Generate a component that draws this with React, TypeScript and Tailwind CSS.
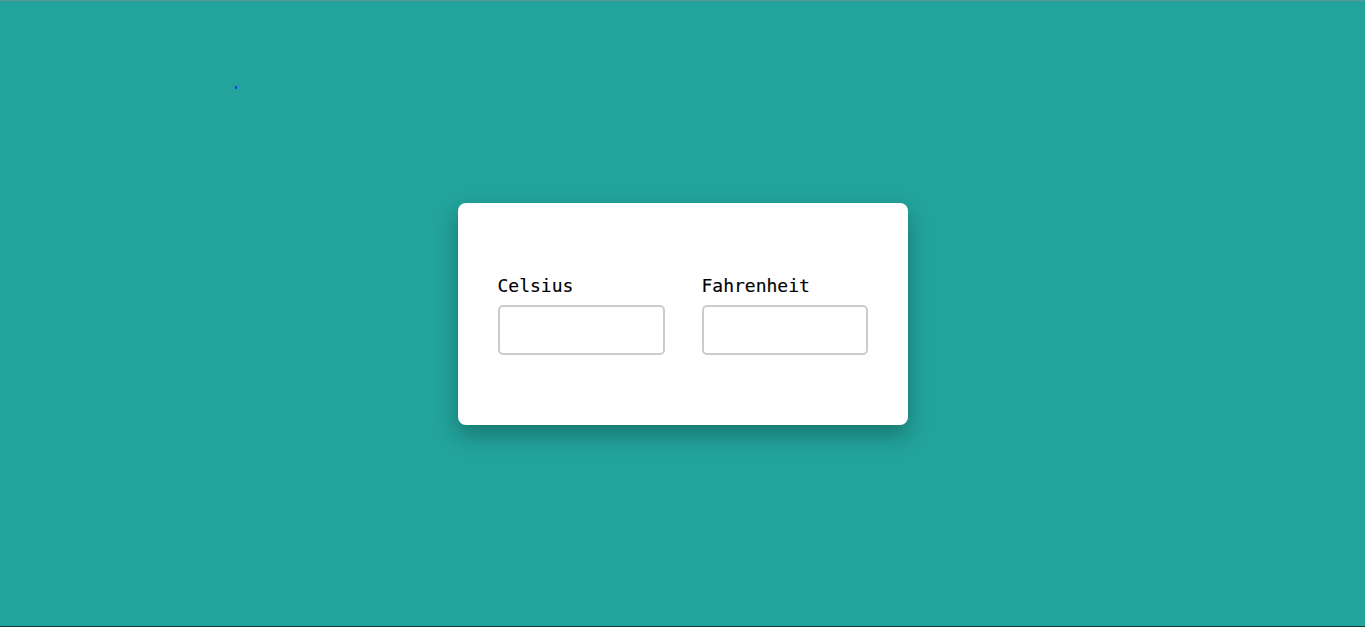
import React, { useState } from 'react';

export default function App() {
  const [celsius, setCelsius] = useState('');
  const [fahrenheit, setFahrenheit] = useState('');

  return (
    <div className="relative h-[627px] w-full bg-[#22a39b] border-t border-t-[#5f9793] border-b border-b-[#0e3d3a] flex items-center justify-center font-['DejaVu_Sans_Mono','Liberation_Mono',monospace]">
      {/* stray mark in the top-left */}
      <span className="absolute left-[235px] top-[85px] w-[2px] h-[3px] rounded-full bg-[#1a2cff] -rotate-12" />

      <div className="w-[450px] h-[222px] bg-white rounded-lg shadow-[0_10px_22px_rgba(0,0,0,0.28)] flex items-center px-10 pt-[2px]">
        <div className="flex gap-[37px]">
          <label className="flex flex-col">
            <span className="text-[18px] leading-[24px] text-black mb-[7px] [-webkit-text-stroke:0.15px_black]">Celsius</span>
            <input
              value={celsius}
              onChange={(e) => setCelsius(e.target.value)}
              className="w-[167px] h-[50px] border-2 border-[#cccccc] rounded-[5px] outline-none px-2"
            />
          </label>
          <label className="flex flex-col">
            <span className="text-[18px] leading-[24px] text-black mb-[7px] [-webkit-text-stroke:0.15px_black]">Fahrenheit</span>
            <input
              value={fahrenheit}
              onChange={(e) => setFahrenheit(e.target.value)}
              className="w-[166px] h-[50px] border-2 border-[#cccccc] rounded-[5px] outline-none px-2"
            />
          </label>
        </div>
      </div>
    </div>
  );
}
